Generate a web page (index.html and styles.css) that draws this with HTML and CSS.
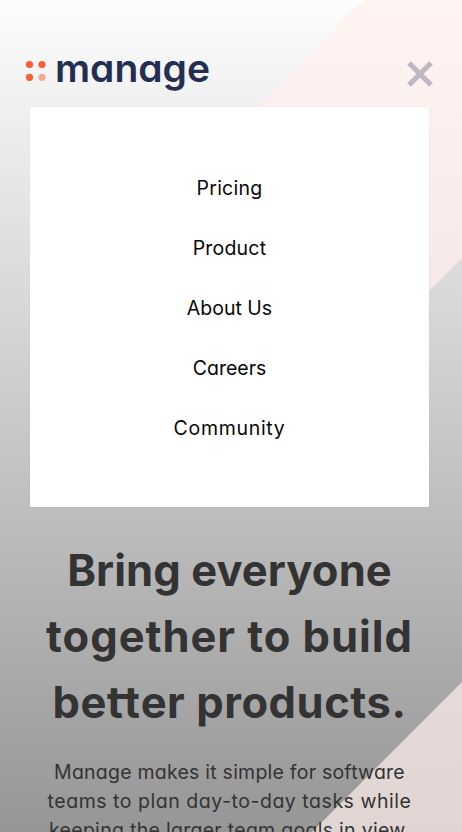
FILE: index.html
```html
<!DOCTYPE html>
<html lang="en">
<head>
<meta charset="utf-8">
<meta name="viewport" content="width=device-width, initial-scale=1">
<title>Manage</title>
<link rel="stylesheet" href="styles.css">
</head>
<body>
<div class="page">
  <svg class="backdrop" viewBox="0 0 462 832" aria-hidden="true">
    <defs>
      <linearGradient id="blush" gradientUnits="userSpaceOnUse" x1="0" y1="0" x2="0" y2="832">
        <stop offset="0" stop-color="#fff4f1"/>
        <stop offset="1" stop-color="#e0d5d2"/>
      </linearGradient>
    </defs>
    <path fill="url(#blush)" d="M367 0C357 5 349 12 340 24L200 164V480H240L462 258V0Z"/>
    <path fill="url(#blush)" d="M462 682L312 832H462Z"/>
  </svg>
  <header class="header">
    <svg class="logo" viewBox="0 0 190 50" role="img" aria-label="manage">
      <g class="logo-dots">
        <circle cx="9.5" cy="19.5" r="3.6"/>
        <circle cx="22" cy="19.5" r="3.6"/>
        <circle cx="9.5" cy="32.3" r="3.6"/>
        <circle class="dot-light" cx="22" cy="32.3" r="3.6"/>
      </g>
      <text class="logo-text" x="35" y="37.3" textLength="155">manage</text>
    </svg>
    <button class="close" aria-label="Close menu">
      <svg viewBox="0 0 26 26"><path d="M2 2L24 24M24 2L2 24"/></svg>
    </button>
  </header>
  <nav class="menu">
    <a class="item pricing">Pricing</a>
    <a class="item product">Product</a>
    <a class="item about">About Us</a>
    <a class="item careers">Careers</a>
    <a class="item community">Community</a>
  </nav>
  <main class="hero">
    <h1 class="title">
      <span class="line t1">Bring everyone</span>
      <span class="line t2">together to build</span>
      <span class="line t3">be<span class="joined">tt</span>er products.</span>
    </h1>
    <p class="copy">
      <span class="line c1">Manage makes it simple for software</span>
      <span class="line c2">teams to plan day-to-day tasks while</span>
      <span class="line c3">keeping the larger team goals in view.</span>
    </p>
  </main>
</div>
</body>
</html>
```
FILE: styles.css
```css
* { box-sizing: border-box; }
body { margin: 0; overflow: hidden; font-family: Inter, "Liberation Sans", sans-serif; }
.page {
  position: relative;
  height: 832px;
  padding-right: 3px;
  overflow: hidden;
  background: linear-gradient(#fdfdfd, #969696);
}
.backdrop { position: absolute; inset: 0; width: 462px; height: 832px; }
.header {
  position: relative;
  display: flex;
  justify-content: space-between;
  align-items: flex-start;
  height: 107px;
  padding: 45px 26px 0 20px;
}
.logo { width: 190px; height: 50px; overflow: visible; }
.logo-dots { fill: #f65f38; }
.logo-dots .dot-light { fill: #f5a997; }
.logo-text { font-size: 39px; font-weight: 600; fill: #242d52; font-feature-settings: "cv11"; }
.close { width: 26px; height: 26px; margin-top: 16px; padding: 0; border: 0; background: none; }
.close svg { display: block; width: 26px; height: 26px; overflow: visible; }
.close path { stroke: #bfb7c1; stroke-width: 5.2; fill: none; }
.menu {
  position: relative;
  display: flex;
  flex-direction: column;
  height: 400px;
  margin: 0 30px;
  padding-top: 51px;
  background: #fff;
  box-shadow: 0 0 2px rgba(0, 0, 0, 0.04);
}
.item {
  height: 60px;
  line-height: 60px;
  text-align: center;
  font-size: 19.5px;
  color: #080808;
  font-feature-settings: "cv11";
}
.pricing { letter-spacing: 0.25px; }
.product { letter-spacing: 0.2px; }
.community { letter-spacing: 0.7px; }
.hero { position: relative; text-align: center; }
.line { display: block; white-space: nowrap; }
.title {
  margin: 30px 0 0;
  font-size: 43.5px;
  line-height: 66px;
  font-weight: 670;
  color: #333;
}
.t1 { letter-spacing: 0.1px; }
.t2 { letter-spacing: 0.95px; }
.t3 { letter-spacing: 0.55px; }
.joined { position: relative; letter-spacing: 2.8px; margin-right: -2.2px; }
.joined::before {
  content: "";
  position: absolute;
  left: 7px;
  width: 17px;
  top: 18px;
  height: 5px;
  background: currentColor;
}
.copy {
  margin: 23px 0 0;
  font-size: 19.5px;
  line-height: 29px;
  color: #333;
  font-feature-settings: "cv11";
}
.c1 { letter-spacing: 0.23px; }
.c2 { letter-spacing: 0.53px; }
.c3 { letter-spacing: 0.29px; }
```
